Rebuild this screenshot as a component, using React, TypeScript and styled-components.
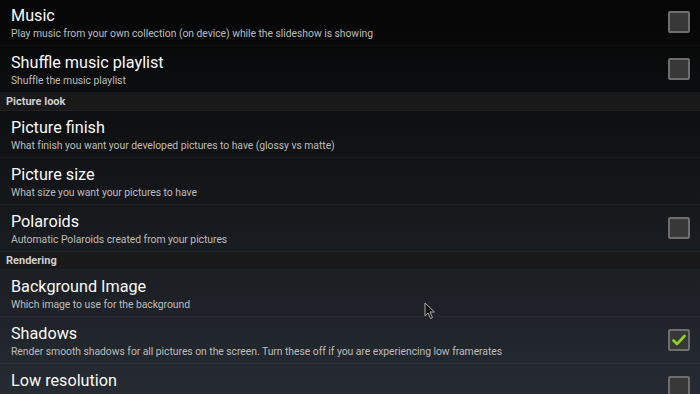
import React from 'react';
import styled, { createGlobalStyle } from 'styled-components';

const GlobalStyle = createGlobalStyle`
  html, body {
    margin: 0;
    padding: 0;
  }
  body {
    width: 700px;
    height: 394px;
    overflow: hidden;
    font-family: Roboto, 'Liberation Sans', sans-serif;
  }
`;

const Screen = styled.div`
  position: relative;
  width: 700px;
  height: 394px;
  overflow: hidden;
  background: linear-gradient(180deg, #050505 0%, #111315 40%, #262b33 100%);
`;

const List = styled.div`
  display: flex;
  flex-direction: column;
  margin-top: -1px;
`;

const SectionHeader = styled.div`
  height: 17px;
  line-height: 17px;
  padding-left: 6px;
  background: #1a1919;
  border-bottom: 1px solid #222;
  color: #cfcfcf;
  font-size: 11px;
  font-weight: 700;
`;

const Row = styled.div`
  display: flex;
  align-items: center;
  height: 46px;
  padding: 0 10px 0 11px;
  border-bottom: 1px solid rgba(255, 255, 255, 0.035);
`;

const Texts = styled.div`
  flex: 1;
  display: flex;
  flex-direction: column;
  align-self: flex-start;
  padding-top: 6px;
  min-width: 0;
`;

const Title = styled.div`
  color: #fafafa;
  font-size: 16.2px;
  line-height: 22px;
  white-space: nowrap;
`;

const Summary = styled.div`
  color: #bcbcbc;
  font-size: 10.4px;
  line-height: 14px;
  letter-spacing: -0.05px;
  white-space: nowrap;
`;

const Box = styled.div`
  width: 18px;
  height: 18px;
  border: 2px solid #6e6e6e;
  border-radius: 2px;
  background: #383838;
  display: flex;
  align-items: center;
  justify-content: center;
  flex-shrink: 0;
`;

const Cursor = styled.svg`
  position: absolute;
  left: 424px;
  top: 302px;
`;

type Item =
  | { kind: 'header'; label: string }
  | { kind: 'pref'; title: string; summary?: string; check?: boolean; checked?: boolean };

const items: Item[] = [
  { kind: 'pref', title: 'Music', summary: 'Play music from your own collection (on device) while the slideshow is showing', check: true },
  { kind: 'pref', title: 'Shuffle music playlist', summary: 'Shuffle the music playlist', check: true },
  { kind: 'header', label: 'Picture look' },
  { kind: 'pref', title: 'Picture finish', summary: 'What finish you want your developed pictures to have (glossy vs matte)' },
  { kind: 'pref', title: 'Picture size', summary: 'What size you want your pictures to have' },
  { kind: 'pref', title: 'Polaroids', summary: 'Automatic Polaroids created from your pictures', check: true },
  { kind: 'header', label: 'Rendering' },
  { kind: 'pref', title: 'Background Image', summary: 'Which image to use for the background' },
  {
    kind: 'pref',
    title: 'Shadows',
    summary: 'Render smooth shadows for all pictures on the screen. Turn these off if you are experiencing low framerates',
    check: true,
    checked: true,
  },
  { kind: 'pref', title: 'Low resolution', check: true },
];

const CheckBox = ({ checked }: { checked?: boolean }) => (
  <Box>
    {checked && (
      <svg width="14" height="12" viewBox="0 0 14 12">
        <path d="M1.5 6.5 L5 10 L12.5 2" fill="none" stroke="#8ed61e" strokeWidth="2.6" strokeLinecap="round" strokeLinejoin="round" />
      </svg>
    )}
  </Box>
);

const App = () => {
  return (
    <Screen>
      <GlobalStyle />
      <List>
        {items.map((item, i) =>
          item.kind === 'header' ? (
            <SectionHeader key={i}>{item.label}</SectionHeader>
          ) : (
            <Row key={i}>
              <Texts>
                <Title>{item.title}</Title>
                {item.summary && <Summary>{item.summary}</Summary>}
              </Texts>
              {item.check && <CheckBox checked={item.checked} />}
            </Row>
          ),
        )}
      </List>
      <Cursor width="12" height="18" viewBox="0 0 12 18">
        <path d="M1 1 L1 14 L4 11 L6.5 16.5 L8.5 15.5 L6 10 L10.5 10 Z" fill="#111" stroke="#aaa" strokeWidth="1" strokeLinejoin="round" />
      </Cursor>
    </Screen>
  );
};

export default App;
